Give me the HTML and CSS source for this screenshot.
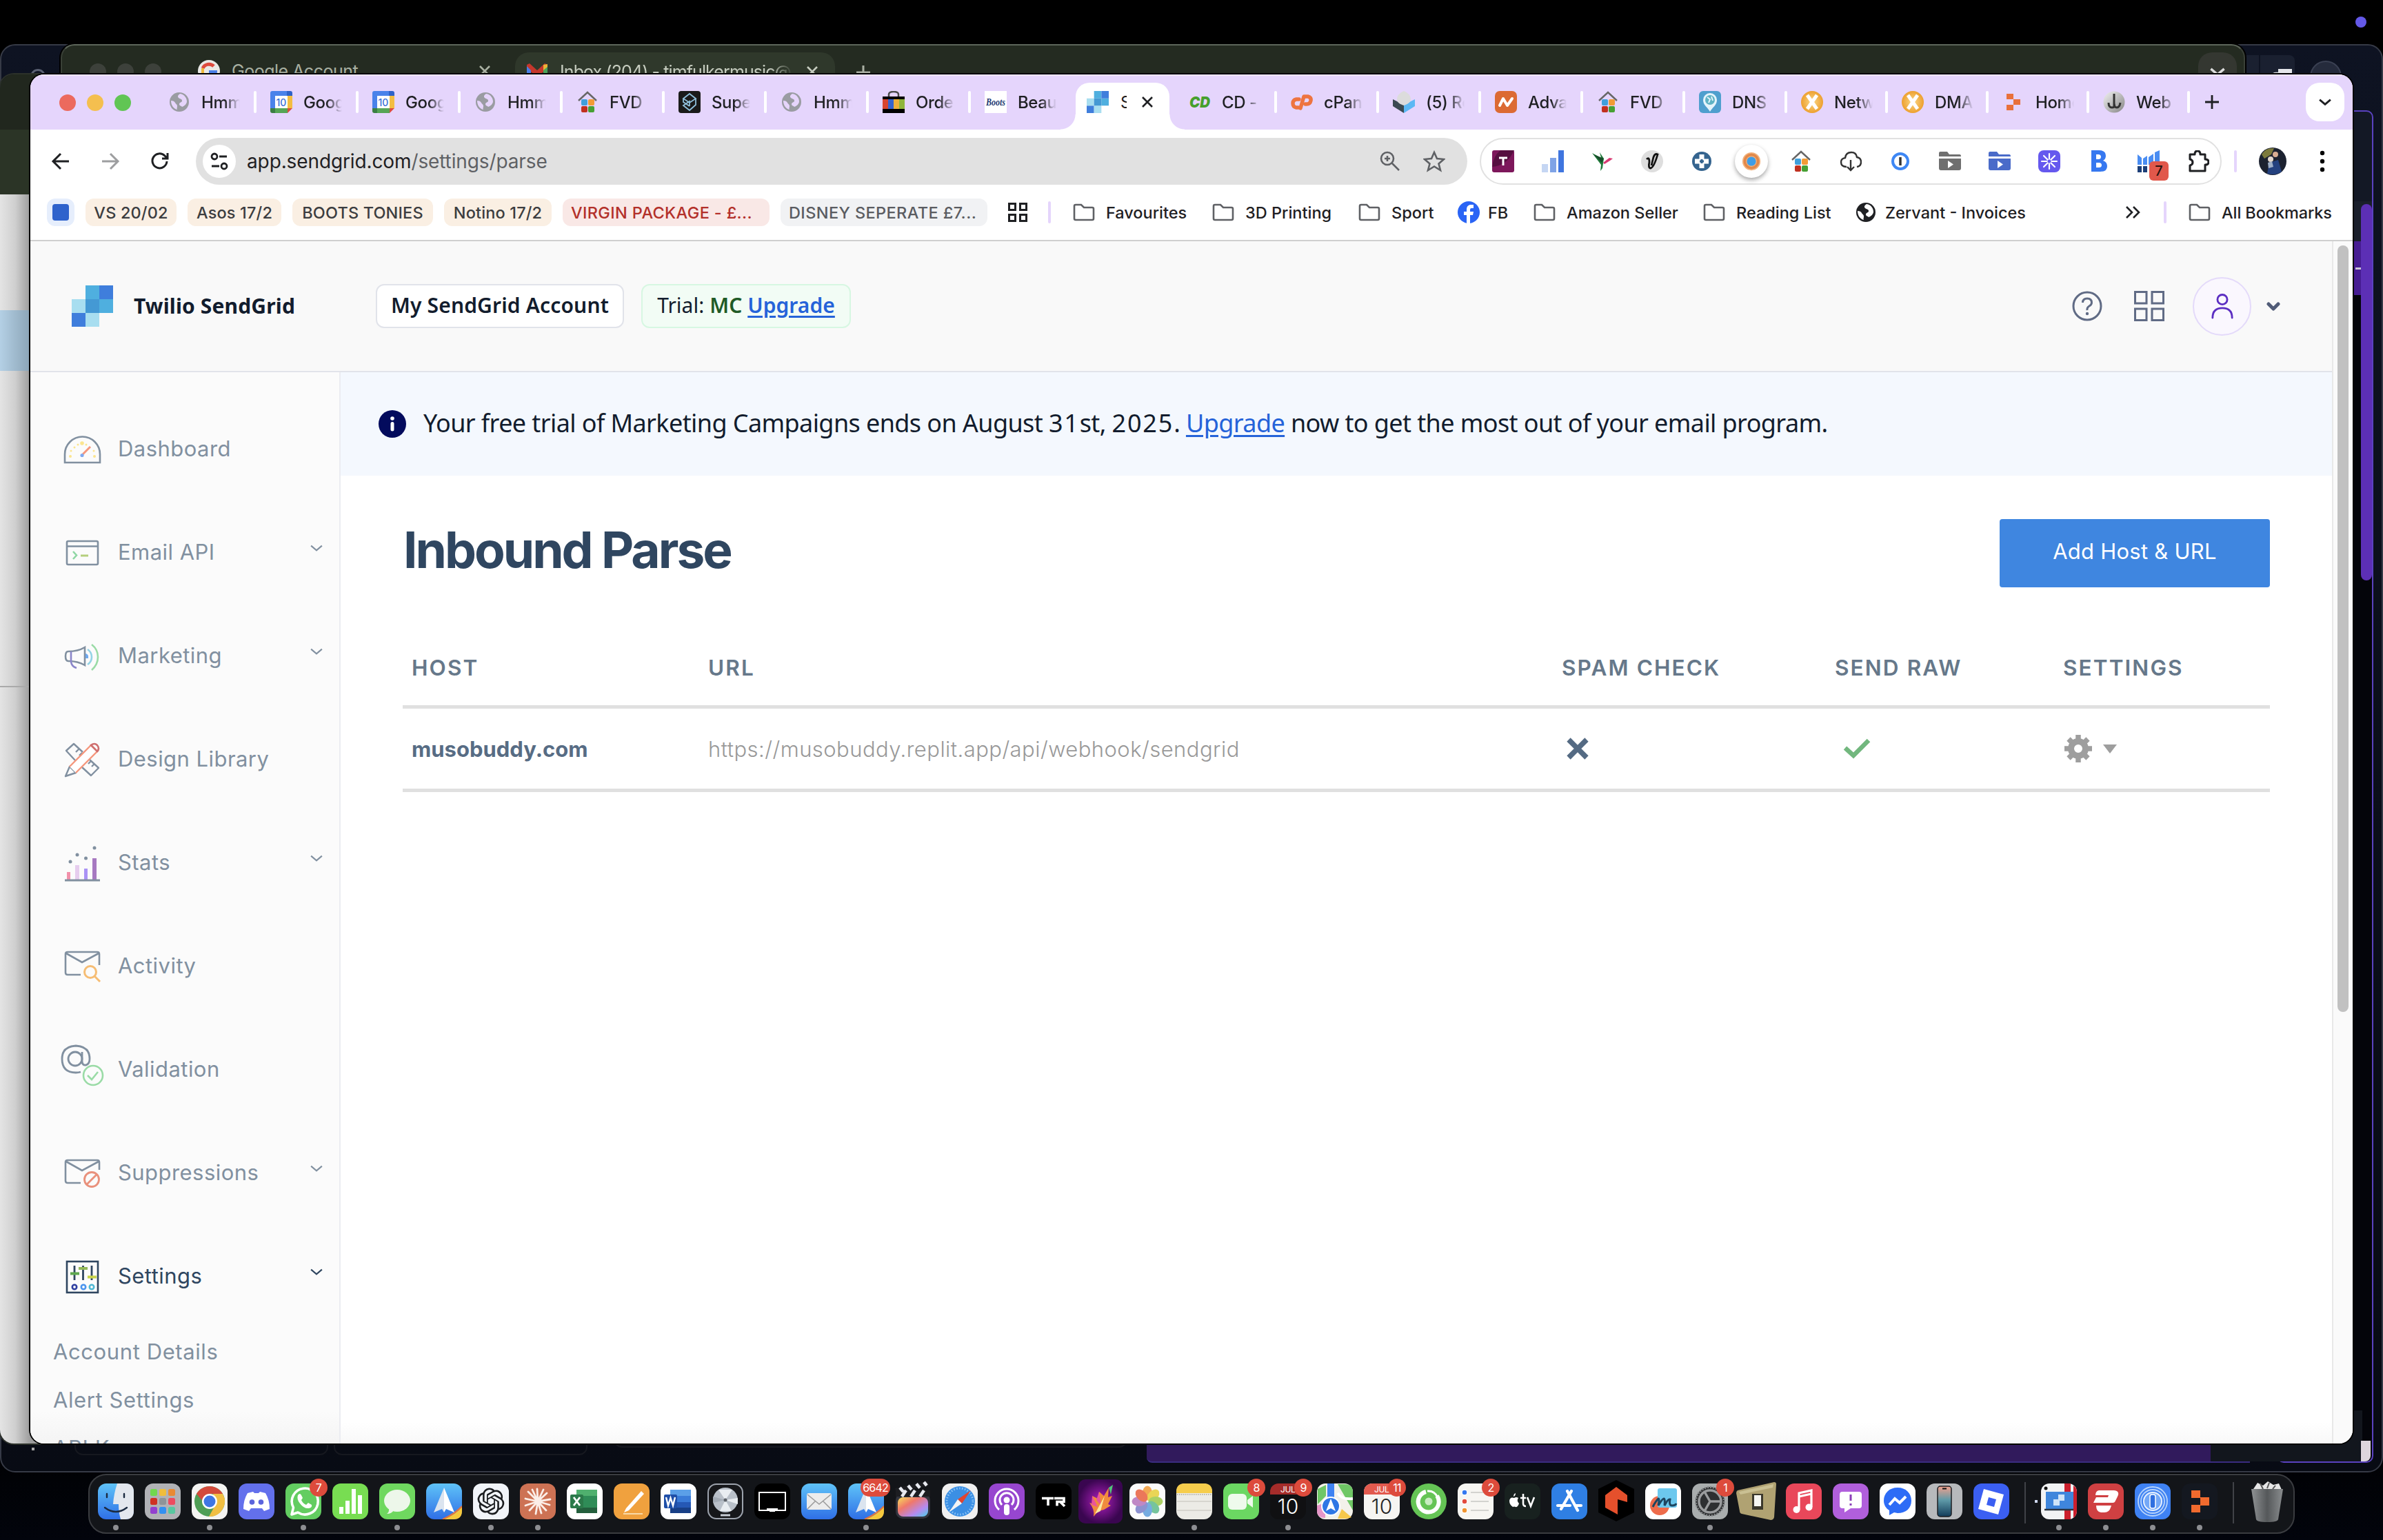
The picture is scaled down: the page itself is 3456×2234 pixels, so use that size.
FILE: index.html
```html
<!DOCTYPE html>
<html lang="en">
<head>
<meta charset="utf-8">
<title>Inbound Parse</title>
<link rel="stylesheet" href="styles.css">
</head>
<body>
<svg class="defs" width="0" height="0" aria-hidden="true">
  <defs>
    <linearGradient id="gBlue" x1="0" y1="0" x2="0" y2="1"><stop offset="0" stop-color="#5fc3f8"/><stop offset="1" stop-color="#2f6fe6"/></linearGradient>
    <linearGradient id="gRain" x1="0" y1="0" x2="1" y2="1"><stop offset="0" stop-color="#f7e05a"/><stop offset=".35" stop-color="#f0786a"/><stop offset=".7" stop-color="#b58af0"/><stop offset="1" stop-color="#4ad0e8"/></linearGradient>
    <linearGradient id="gPhone" x1="0" y1="0" x2="0" y2="1"><stop offset="0" stop-color="#f2a08c"/><stop offset=".45" stop-color="#5f9aa8"/><stop offset="1" stop-color="#123c5a"/></linearGradient>
    <linearGradient id="gTrash" x1="0" y1="0" x2="1" y2="0"><stop offset="0" stop-color="#8f9294"/><stop offset=".5" stop-color="#55585a"/><stop offset="1" stop-color="#8a8d8f"/></linearGradient>
    <linearGradient id="gSilver" x1="0" y1="0" x2="1" y2="1"><stop offset="0" stop-color="#f2f2f2"/><stop offset="1" stop-color="#858585"/></linearGradient>
    <radialGradient id="gOrange"><stop offset="0" stop-color="#fbd98a"/><stop offset="1" stop-color="#eda02f"/></radialGradient>
    <radialGradient id="gMag"><stop offset="0" stop-color="#b01fc0"/><stop offset="1" stop-color="#3a0650"/></radialGradient>
  </defs>
  <symbol id="globe" viewBox="0 0 32 32"><circle cx="16" cy="16" r="14" fill="currentColor"/><path d="M17 4c-3 2-4 4-2 6s5 1 5 4-4 2-4 5 3 2 4 4c3-1 7-4 7-8s-3-10-10-11zM4 14c3 0 5 1 6 3s3 2 3 5-1 3 0 5c-5-1-9-6-9-13z" fill="var(--land,#e6d5fb)"/></symbol>
  <symbol id="gcal" viewBox="0 0 32 32"><path fill="#4a82ea" d="M3 0h21v7H7v18H0V3a3 3 0 0 1 3-3z"/><path fill="#2f62c8" d="M24 0h5a3 3 0 0 1 3 3v4h-8z"/><path fill="#f3bd42" d="M25 7h7v18h-7z"/><path fill="#56a556" d="M7 25h18v7H7z"/><path fill="#3b7f43" d="M0 25h7v7H3a3 3 0 0 1-3-3z"/><path fill="#dc4b3e" d="M25 25h7l-7 7z"/><path fill="#fff" d="M7 7h18v18H7z"/></symbol>
  <symbol id="house" viewBox="0 0 32 32"><path d="M3 14 16 2l13 12" fill="none" stroke="#666" stroke-width="2.4"/><rect x="7" y="12" width="9" height="9" rx="2" fill="#3fa0dc"/><rect x="17" y="12" width="9" height="9" rx="2" fill="#f29b35"/><rect x="7" y="22" width="9" height="9" rx="2" fill="#c0301f"/><rect x="17" y="22" width="9" height="9" rx="2" fill="#46a033"/></symbol>
  <symbol id="sg" viewBox="0 0 60 60"><path fill="#4fafdf" d="M20 0h20v20H20zM40 20h20v20H40z"/><path fill="#3f7edc" d="M40 0h20v20H40zM0 40h20v20H0z"/><path fill="#a8def0" d="M0 20h20v20H0zM20 40h20v20H20z"/><path fill="#4499d4" d="M20 20h20v20H20z"/></symbol>
  <symbol id="xx" viewBox="0 0 32 32"><circle cx="16" cy="16" r="16" fill="url(#gOrange)"/><path d="M9 6l14 20M23 6 9 26" stroke="#fff" stroke-width="5"/></symbol>
  <symbol id="folder" viewBox="0 0 32 32"><path d="M2 7q0-2 2-2h8l4 4h12q2 0 2 2v14q0 2-2 2H4q-2 0-2-2z" fill="none" stroke="#5f6165" stroke-width="2.600"/></symbol>
  <symbol id="chev" viewBox="0 0 16 16"><path class="chevp" d="M1 5l7 6 7-6" fill="none" stroke="currentColor"/></symbol>
  <symbol id="close" viewBox="0 0 20 20"><path d="M3 3l14 14M17 3 3 17" stroke="currentColor" stroke-width="2.600"/></symbol>
  <symbol id="plane" viewBox="0 0 52 52"><rect width="52" height="52" rx="12" fill="url(#gBlue)"/><path fill="#f6c93c" d="M52 34Q44 44 26 52h14q12 0 12-12z"/><path d="M52 33Q42 44 24 52" fill="none" stroke="#e8743a" stroke-width="2"/><path fill="#fff" d="M26 6l15 36-12-5-3 5z"/><path fill="#dbe4ef" d="M26 6 11 42l12-5 3 5z"/></symbol>
</svg>

<div class="desktop">
  <span class="rec-dot"></span>

  <div class="win-navy">
    <span class="n-ring"></span><span class="n-btn"></span><span class="n-btn n-btn2"><svg viewBox="0 0 50 40"><path fill="#e4e6ea" d="M26 20h20v20H26z"/><path d="M18 40V30q0-4 5-4h4" fill="none" stroke="#e4e6ea" stroke-width="2.500"/></svg></span><span class="n-avatar"></span>
    <span class="n-pane"></span><span class="n-head"></span><span class="n-scroll"></span><span class="n-tag"></span>
    <span class="n-card c1"></span><span class="n-card c2"></span><span class="n-card c3"></span><span class="n-purple"></span><span class="n-foot"></span><span class="n-corner"></span><span class="n-speck"></span>
  </div>

  <div class="win-green">
    <div class="g-lights"><i></i><i></i><i></i></div>
    <div class="g-tab">
      <svg viewBox="0 0 32 32"><circle cx="16" cy="16" r="16" fill="#e9e9e6"/><path d="M23 9A10 10 0 0 0 7 12" fill="none" stroke="#dd4b3e" stroke-width="5"/><path d="M7 12v8" stroke="#f0b93b" stroke-width="4"/><path d="M16 17h10q0 8-8 9" fill="none" stroke="#4a7fe5" stroke-width="4"/></svg>
      <span>Google Account</span><svg class="x"><use href="#close"/></svg>
    </div>
    <div class="g-tab on">
      <svg viewBox="0 0 32 32"><path fill="#c5372c" d="M1 6l4-2 11 10L27 4l4 2v6L16 23 1 12z"/><path fill="#4a7fe5" d="M1 8l6 6v14H1z"/><path fill="#e8b437" d="M25 6l6-1v6l-6 5z"/><path fill="#4aa25a" d="M25 14l6-5v19h-6z"/></svg>
      <span class="fade">Inbox (204) - timfulkermusic@</span><svg class="x"><use href="#close"/></svg>
    </div>
    <svg class="g-plus" viewBox="0 0 20 20"><path d="M10 0v20M0 10h20" stroke="#aab0a4" stroke-width="3"/></svg>
    <div class="g-chev"><svg><use href="#chev"/></svg></div>
  </div>

  <div class="win-side"><div class="s-top"></div><div class="s-bar"></div><div class="s-page"><div class="s-band"></div><div class="s-line"></div></div></div>

  <main class="chrome">
    <div class="tabs">
      <div class="lights"><i class="r"></i><i class="y"></i><i class="g"></i></div>
      <div class="tab"><svg class="grey"><use href="#globe"/></svg><span>Hmmm</span></div>
      <div class="tab"><svg viewBox="0 0 32 32"><use href="#gcal"/><text class="day" x="16" y="21.500">10</text></svg><span>Google</span></div>
      <div class="tab"><svg viewBox="0 0 32 32"><use href="#gcal"/><text class="day" x="16" y="21.500">10</text></svg><span>Google</span></div>
      <div class="tab"><svg class="grey"><use href="#globe"/></svg><span>Hmmm</span></div>
      <div class="tab"><svg><use href="#house"/></svg><span>FVD</span></div>
      <div class="tab"><svg viewBox="0 0 32 32"><rect width="32" height="32" rx="4" fill="#1a1a1a"/><path d="M16 4 7 11l9 6 9-6zM7 11v5l9 6M25 11v9l-9 8-9-7 9-6v7" fill="none" stroke="#8fc0dc" stroke-width="1.800"/></svg><span>Supe</span></div>
      <div class="tab"><svg class="grey"><use href="#globe"/></svg><span>Hmmm</span></div>
      <div class="tab"><svg viewBox="0 0 32 32"><path d="M9 9V5q0-4 7-4t7 4v4" fill="none" stroke="#4a4a4a" stroke-width="2.500"/><path fill="#000" d="M0 8h32v24H0z"/><path fill="#d8442e" d="M0 12h8v14H0z"/><path fill="#3564cf" d="M8 12h8v14H8z"/><path fill="#eeb13c" d="M16 12h8v14h-8z"/><path fill="#8fb53c" d="M24 12h8v14h-8z"/></svg><span>Order</span></div>
      <div class="tab nosep"><svg viewBox="0 0 32 32"><path fill="#fff" d="M0 0h32v32H0z"/><text class="boots" x="16" y="21" textLength="28" lengthAdjust="spacingAndGlyphs">Boots</text></svg><span>Beaut</span></div>
      <div class="tab-on"><svg class="fav"><use href="#sg"/></svg><span>S</span><svg class="x"><use href="#close"/></svg></div>
      <div class="tab"><svg viewBox="0 0 32 32"><text class="cd" x="16" y="24" textLength="30" lengthAdjust="spacingAndGlyphs">CD</text></svg><span>CD -</span></div>
      <div class="tab"><svg viewBox="0 0 32 32"><g fill="none" stroke="#ee7440" stroke-width="5.400" stroke-linecap="round" stroke-linejoin="round"><path d="M12 12H8q-5 1-5 6t5 6h3"/><path d="M14 25 19 8h6q5 1 4 6t-6 5h-2"/></g></svg><span>cPane</span></div>
      <div class="tab"><svg viewBox="0 0 32 32"><path fill="#3b4a52" d="M0 12l16 8v12L0 22z"/><path fill="#5cb8f4" d="M32 12l-16 8v12l16-10z"/><path fill="#dcdcdc" d="M16 0q10 4 10 12 0 6-10 9Q6 18 6 12 6 4 16 0z"/></svg><span>(5) Re</span></div>
      <div class="tab"><svg viewBox="0 0 32 32"><rect width="32" height="32" rx="7" fill="#dc6a33"/><path d="M7 21l5-10 6 10 7-10" fill="none" stroke="#fff" stroke-width="4" stroke-linecap="round" stroke-linejoin="round"/></svg><span>Advan</span></div>
      <div class="tab"><svg><use href="#house"/></svg><span>FVD</span></div>
      <div class="tab"><svg viewBox="0 0 32 32"><rect width="32" height="32" rx="6" fill="#4f9fce"/><path fill="#e4f4fb" d="M16 3a10 10 0 0 1 10 10c0 8-7 11-10 17C13 24 6 21 6 13A10 10 0 0 1 16 3z"/><circle cx="16" cy="13" r="7" fill="#5fb3c4"/><path d="M12 9l4 3-2 5m4-9 2 6" stroke="#e4f4fb" stroke-width="2" fill="none"/></svg><span>DNS</span></div>
      <div class="tab slim"><svg><use href="#xx"/></svg><span>Netw</span></div>
      <div class="tab slim"><svg><use href="#xx"/></svg><span>DMA</span></div>
      <div class="tab slim"><svg viewBox="0 0 32 32"><path fill="#e9703a" d="M6 4h10v8H6zM16 12h10v8H16zM6 20h10v8H6z"/></svg><span>Home</span></div>
      <div class="tab slim"><svg viewBox="0 0 32 32"><circle cx="16" cy="16" r="15.500" fill="url(#gSilver)"/><path d="M16 4v20M8 17q0 7 5 7t3-6q0 6 4 6t5-7" fill="none" stroke="#333" stroke-width="3"/></svg><span>Web</span></div>
      <svg class="plus" viewBox="0 0 22 22"><path d="M11 1v20M1 11h20" stroke="#1f2023" stroke-width="2.800"/></svg>
      <div class="tabsearch"><svg><use href="#chev"/></svg></div>
    </div>

    <div class="toolbar">
      <div class="nav">
        <svg viewBox="0 0 28 28"><path d="M26 14H4M14 3 3 14l11 11" fill="none" stroke="#1f2023" stroke-width="3"/></svg>
        <svg viewBox="0 0 28 28"><path d="M2 14h22M14 3l11 11-11 11" fill="none" stroke="#9d9ea0" stroke-width="3"/></svg>
        <svg viewBox="0 0 28 28"><path d="M24 14a10.500 10.500 0 1 1-3-8l4 4M25 2v8h-8" fill="none" stroke="#1f2023" stroke-width="3"/></svg>
      </div>
      <div class="omni">
        <div class="site"><svg viewBox="0 0 28 28"><g fill="none" stroke="#1f2023" stroke-width="2.800"><circle cx="7" cy="7" r="4"/><path d="M14 7h11M3 21h11"/><circle cx="21" cy="21" r="4"/></g></svg></div>
        <span class="url">app.sendgrid.com<em>/settings/parse</em></span>
        <svg class="oi" viewBox="0 0 32 32"><g fill="none" stroke="#5f6165" stroke-width="2.600"><circle cx="12" cy="12" r="9"/><path d="M18 18l11 11M12 8v8M8 12h8"/></g></svg>
        <svg class="oi" viewBox="0 0 32 32"><path d="M16 3l4 9 10 1-7.500 6.500L25 29l-9-5.500L7 29l2.500-9.500L2 13l10-1z" fill="none" stroke="#5f6165" stroke-width="2.600"/></svg>
      </div>
      <div class="exts">
        <svg viewBox="0 0 32 32"><rect width="32" height="32" rx="3" fill="#7d175b"/><path d="M0 24Q22 22 32 0H12Q2 8 0 24z" fill="#560f40"/><path d="M10 11h12M16 11v11" stroke="#fff" stroke-width="3"/></svg>
        <svg viewBox="0 0 32 32"><path fill="#c5d6f3" d="M0 20h9v12H0z"/><path fill="#7fa3e6" d="M12 11h9v21h-9z"/><path fill="#3f75df" d="M24 0h8v32h-8z"/></svg>
        <svg viewBox="0 0 32 32"><path fill="#1f7a3a" d="M1 4l13 7-2-8 6 9-2 14-3 4 1-9z"/><path fill="#d93a72" d="M17 18q6-5 9-7l5 1-4 3-8 5z"/><path fill="#174c2a" d="M3 6l12 12 3-6z"/></svg>
        <svg viewBox="0 0 32 32"><circle cx="16" cy="16" r="16" fill="#dedede"/><path d="M8 13q4-4 4 4-2 9 2 9 5-2 10-20-4-2-6 4-2 8-3 12" fill="none" stroke="#111" stroke-width="2.800"/></svg>
        <svg viewBox="0 0 32 32"><circle cx="16" cy="16" r="14" fill="#35648f"/><path d="M16 6v20M6 16h20" stroke="#fff" stroke-width="7"/><path d="M16 13v6M13 16h6" stroke="#35648f" stroke-width="3"/></svg>
        <div class="bubble"><svg viewBox="0 0 32 32"><circle cx="16" cy="16" r="15" fill="#f2b27c"/><circle cx="16" cy="16" r="11" fill="none" stroke="#e2884a" stroke-width="4"/><circle cx="16" cy="16" r="7.500" fill="#3f9de6"/></svg></div>
        <svg><use href="#house"/></svg>
        <svg viewBox="0 0 32 32"><path d="M10 24q-8 0-8-7 0-5 6-6 1-8 9-8 7 0 8 7 6 1 6 7 0 6-6 7M16 14v15M11 24l5 5 5-5" fill="none" stroke="#333" stroke-width="2.400"/></svg>
        <svg viewBox="0 0 32 32"><circle cx="16" cy="16" r="11" fill="#fff" stroke="#3e87f4" stroke-width="4"/><path d="M16 10v12" stroke="#333" stroke-width="3.500"/></svg>
        <svg viewBox="0 0 32 32"><path fill="#6f6f6f" d="M0 9V4q0-2 2-2h10l3 4h15q2 0 2 3zM0 12h32v14q0 3-3 3H3q-3 0-3-3z"/><path fill="#fff" d="M13 15v11l8-5.500z"/></svg>
        <svg viewBox="0 0 32 32"><path fill="#4a6bc9" d="M0 9V4q0-2 2-2h10l3 4h15q2 0 2 3zM0 12h32v14q0 3-3 3H3q-3 0-3-3z"/><path fill="#fff" d="M13 15v11l8-5.500z"/></svg>
        <svg viewBox="0 0 32 32"><rect width="32" height="32" rx="8" fill="#6558ee"/><g stroke="#fff" stroke-width="2.200" stroke-linecap="round"><path d="M16 5v8M16 19v8M5 16h8M19 16h8M8 8l6 6M18 18l6 6M24 8l-6 6M14 18l-6 6"/></g><circle cx="16" cy="16" r="2.500" fill="#6558ee"/></svg>
        <svg viewBox="0 0 32 32"><path fill="#3678f0" fill-rule="evenodd" d="M5 0h11q10 0 10 8 0 5-4 7 6 2 6 8 0 8-10 8H5zm7 6v7h3q4 0 4-3.500T15 6zm0 12v7h4q4 0 4-3.500T16 18z"/></svg>
        <div class="seven"><svg viewBox="0 0 32 32"><path fill="#4a8df2" d="M0 6l6 5v10H0zM8 12l6-4v13H8zM16 10l7-5v16h-7zM25 3l7-3v21h-7z"/><path fill="#1d3f78" d="M0 23h6v9H0zM8 23h6v9H8z"/></svg><b>7</b></div>
        <svg viewBox="0 0 32 32"><path d="M4 6h7q0-5 4-5t4 5h7v7q5 0 5 4t-5 4v9H4v-8q4-1 4-4.500T4 13z" fill="none" stroke="#1f2023" stroke-width="3" stroke-linejoin="round"/></svg>
      </div>
      <span class="tsep"></span>
      <svg class="me" viewBox="0 0 40 40"><circle cx="20" cy="20" r="20" fill="#1c2230"/><path fill="#7c7a3c" d="M4 10Q10 0 22 1l-4 9-10 6z"/><path fill="#24417f" d="M12 38l3-16 13-4 5 17q-8 6-21 3z"/><circle cx="17" cy="17" r="4" fill="#e5d9cf"/><circle cx="24" cy="10" r="4" fill="#d9ad92"/><path fill="#9fb0c8" d="M13 22l6-2 2 8-7 2z"/></svg>
      <svg class="dots" viewBox="0 0 8 32"><circle cx="4" cy="4" r="3.200"/><circle cx="4" cy="16" r="3.200"/><circle cx="4" cy="28" r="3.200"/></svg>
    </div>

    <div class="marks">
      <div class="chips">
        <span class="chip blue"><i></i></span><span class="chip">VS 20/02</span><span class="chip">Asos 17/2</span><span class="chip">BOOTS TONIES</span><span class="chip">Notino 17/2</span><span class="chip red">VIRGIN PACKAGE - £...</span><span class="chip gray">DISNEY SEPERATE £7...</span>
      </div>
      <svg class="apps" viewBox="0 0 28 28"><path d="M1.500 1.500h9v9h-9zM17.500 1.500h9v9h-9zM1.500 17.500h9v9h-9zM17.500 17.500h9v9h-9z" fill="none" stroke="#1f2023" stroke-width="3"/></svg>
      <span class="tsep"></span>
      <div class="bms">
        <span><svg><use href="#folder"/></svg>Favourites</span><span><svg><use href="#folder"/></svg>3D Printing</span><span><svg><use href="#folder"/></svg>Sport</span><span class="tight"><svg viewBox="0 0 32 32"><circle cx="16" cy="16" r="16" fill="#2a64f5"/><path fill="#fff" d="M13 32V20H9v-5h4v-3c0-5 3-7 6-7h4v5h-3q-2 0-2 2v3h5l-1 5h-4v12z"/></svg>FB</span><span><svg><use href="#folder"/></svg>Amazon Seller</span><span><svg><use href="#folder"/></svg>Reading List</span><span class="zer"><svg><use href="#globe"/></svg>Zervant - Invoices</span>
      </div>
      <svg class="more" viewBox="0 0 22 22"><path d="M2 3l8 8-8 8M12 3l8 8-8 8" fill="none" stroke="#1f2023" stroke-width="2.600"/></svg>
      <span class="tsep"></span>
      <div class="bms all"><span><svg><use href="#folder"/></svg>All Bookmarks</span></div>
    </div>

    <div class="view">
      <div class="page">
        <header class="top">
          <svg class="logo"><use href="#sg"/></svg><strong class="brand">Twilio SendGrid</strong>
          <span class="acct">My SendGrid Account</span>
          <span class="trial">Trial: <b>MC</b> <a>Upgrade</a></span>
          <div class="tools">
            <svg class="i44" viewBox="0 0 44 44"><g fill="none" stroke="#606b85" stroke-width="3"><circle cx="22" cy="22" r="20"/><path d="M15.500 17q0-6 6.500-6t6.500 6q0 3-3.500 5t-3 6"/></g><circle cx="22" cy="33" r="2.200" fill="#606b85"/></svg>
            <svg class="i44" viewBox="0 0 44 44"><path d="M1.500 1.500h16.500v16.500H1.500zM26 1.500h16.500v16.500H26zM1.500 26h16.500v16.500H1.500zM26 26h16.500v16.500H26z" fill="none" stroke="#606b85" stroke-width="3"/></svg>
            <div class="person"><svg viewBox="0 0 36 40"><g fill="none" stroke="#5c2fc2" stroke-width="3" stroke-linecap="round"><circle cx="18" cy="10" r="7.500"/><path d="M3 38q0-15 15-15t15 15"/></g></svg></div>
            <svg class="pc" viewBox="0 0 20 14"><path d="M3 3l7 7 7-7" fill="none" stroke="#515c78" stroke-width="5" stroke-linecap="round" stroke-linejoin="round"/></svg>
          </div>
        </header>
        <div class="body">
          <nav class="side">
            <div class="item"><svg viewBox="0 0 64 64"><path d="M7 53V41a25.500 25.500 0 0 1 51 0v12z" fill="none" stroke="#8190a0" stroke-width="2.600"/><g fill="#fbe58f"><circle cx="32" cy="25" r="2.800"/><circle cx="26" cy="27" r="1.500"/><circle cx="38" cy="27" r="1.500"/><circle cx="21" cy="31" r="1.500"/><circle cx="16" cy="36" r="1.500"/><circle cx="49" cy="36" r="1.500"/><circle cx="15" cy="44" r="2"/><circle cx="50" cy="44" r="2"/></g><path d="M33 41l11-11" stroke="#f5977d" stroke-width="3"/><circle cx="32" cy="42.500" r="2.600" fill="#7fa9f0"/></svg><span>Dashboard</span></div>
            <div class="item"><svg viewBox="0 0 64 64"><rect x="10" y="17" width="45" height="34" rx="2" fill="none" stroke="#8190a0" stroke-width="2.600"/><path d="M10 24.500h45" stroke="#8190a0" stroke-width="2.600"/><path d="M19 32l5 5.500-5 5.500" fill="none" stroke="#8fd7a4" stroke-width="2.600"/><path d="M30 38h11" stroke="#b5cf7c" stroke-width="3"/></svg><span>Email API</span><svg class="c"><use href="#chev"/></svg></div>
            <div class="item"><svg viewBox="0 0 64 64"><path d="M36 21v26Q26 41 12 41q-4 0-4-7t4-7q14 0 24-6z" fill="none" stroke="#8190a0" stroke-width="2.600"/><path d="M16 27v15q1 7 8 9" fill="none" stroke="#8a86c9" stroke-width="2.600"/><path d="M37 30q5 1 4 7h-4z" fill="#6fa9ee"/><path d="M40 24q6 4 6 11t-6 11" fill="none" stroke="#93d3e6" stroke-width="2.600"/><path d="M46 17q9 7 9 18t-9 19" fill="none" stroke="#9adba6" stroke-width="2.600"/></svg><span>Marketing</span><svg class="c"><use href="#chev"/></svg></div>
            <div class="item"><svg viewBox="0 0 64 64"><g fill="none" stroke="#8190a0" stroke-width="2.400" stroke-linejoin="round"><path d="M22 35 9 21 20 11l13 12M23 23l5-5M28 28l4-4M32 45l13 12 11-11-13-12M41 40l4-4M46 44l3-3"/><path d="M8 58l6-14 9 9z"/></g><path d="M14 44l31-31 9 9-31 31" fill="#fff" stroke="#f5977d" stroke-width="2.400"/><path d="M45 13q5-4 9 0 4 5 0 9z" fill="none" stroke="#cf6f6f" stroke-width="2.600"/></svg><span>Design Library</span></div>
            <div class="item"><svg viewBox="0 0 64 64"><path fill="#f291ab" d="M10 47h5v11h-5z"/><path fill="#e6cdee" d="M22 37h6v21h-6z"/><path fill="#aa93f5" d="M35 42h5v16h-5z"/><path fill="#a779c1" d="M47 27h6v31h-6z"/><path d="M7 59h51" stroke="#8190a0" stroke-width="3"/><g fill="#8190a0"><circle cx="15" cy="32" r="2.500"/><circle cx="25" cy="22" r="2.500"/><circle cx="37.500" cy="27" r="2.500"/><circle cx="50" cy="12" r="2.500"/></g></svg><span>Stats</span><svg class="c"><use href="#chev"/></svg></div>
            <div class="item"><svg viewBox="0 0 64 64"><path d="M30 46H11q-3 0-3-3V16q0-3 3-3h43q3 0 3 3v16M9 15l23 13 24-13" fill="none" stroke="#8190a0" stroke-width="2.600"/><g fill="none" stroke="#f6bd74" stroke-width="3"><circle cx="44" cy="42" r="8.500"/><path d="M50 48l8 8"/></g></svg><span>Activity</span></div>
            <div class="item"><svg viewBox="0 0 64 64"><g fill="none" stroke="#8190a0" stroke-width="2.800"><circle cx="22" cy="18" r="10"/><path d="M32 8v13q0 7 6 6 5-2 5-9 0-18-20-19Q3 0 3 18q0 20 20 20 4 0 7-1"/></g><circle cx="48" cy="42" r="14" fill="#fbfbfb" stroke="#9adba6" stroke-width="2.600"/><path d="M40 42l6 6 9-11" fill="none" stroke="#9adba6" stroke-width="2.600"/></svg><span>Validation</span></div>
            <div class="item"><svg viewBox="0 0 64 64"><path d="M30 48H11q-3 0-3-3V18q0-3 3-3h43q3 0 3 3v11M9 17l23 13 24-13" fill="none" stroke="#8190a0" stroke-width="2.600"/><g fill="none" stroke="#e9917c" stroke-width="2.800"><circle cx="46" cy="43" r="10.500"/><path d="M38 51l15-15"/></g></svg><span>Suppressions</span><svg class="c"><use href="#chev"/></svg></div>
            <div class="item on"><svg viewBox="0 0 64 64"><rect x="10" y="12" width="45" height="45" fill="none" stroke="#2f4660" stroke-width="2.600"/><path d="M21 18v21M33.500 18v21M46 18v21" stroke="#2f4660" stroke-width="2.800"/><path d="M15 29.500h13" stroke="#5fa84f" stroke-width="4"/><path d="M27 22h13" stroke="#93b858" stroke-width="4"/><path d="M40 34.500h13" stroke="#c9d44a" stroke-width="4"/><g fill="none" stroke-width="2.600"><circle cx="21" cy="49" r="3.200" stroke="#2f3fa0"/><circle cx="34" cy="49" r="3.200" stroke="#4a94ee"/><circle cx="46" cy="49" r="3.200" stroke="#4fb8d4"/></g></svg><span>Settings</span><svg class="c"><use href="#chev"/></svg></div>
            <div class="sub"><span>Account Details</span><span>Alert Settings</span><span>API Keys</span></div>
          </nav>
          <section class="content">
            <div class="banner">
              <svg viewBox="0 0 40 40"><circle cx="20" cy="20" r="20" fill="#030b5d"/><circle cx="20" cy="12" r="2.800" fill="#fff"/><path d="M20 19.500v8.500" stroke="#fff" stroke-width="5" stroke-linecap="round"/></svg>
              <p>Your free trial of Marketing Campaigns ends on August <span class="num">31</span>st, <span class="num">2025</span>. <a>Upgrade</a> now to get the most out of your email program.</p>
            </div>
            <div class="headrow"><h1>Inbound Parse</h1><span class="cta">Add Host &amp; URL</span></div>
            <div class="table">
              <div class="tr th"><span>HOST</span><span>URL</span><span>SPAM CHECK</span><span>SEND RAW</span><span>SETTINGS</span></div>
              <div class="tr td">
                <b>musobuddy.com</b><span>https://musobuddy.replit.app/api/webhook/sendgrid</span>
                <svg class="no" viewBox="0 0 34 34"><path d="M4 4l26 26M30 4 4 30" stroke="#546a83" stroke-width="7.500"/></svg>
                <svg class="yes" viewBox="0 0 40 30"><path d="M3 14l12 11L37 3" fill="none" stroke="#72b77e" stroke-width="6.500"/></svg>
                <div class="gear"><svg viewBox="0 0 40 40"><g fill="none" stroke="#9e9e9e"><circle cx="20" cy="20" r="10.500" stroke-width="9"/><path d="M20 0v7M20 33v7M0 20h7M33 20h7M6 6l5 5M29 29l5 5M34 6l-5 5M11 29l-5 5" stroke-width="7.500"/></g></svg><i></i></div>
              </div>
            </div>
          </section>
        </div>
      </div>
      <div class="scroll"><i></i></div>
    </div>
  </main>

  <footer class="dock">
    <div class="app run"><svg viewBox="0 0 52 52"><rect width="52" height="52" rx="12" fill="url(#gBlue)"/><path d="M28 0Q23 15 22 30h8q0 12 3 22h7q12 0 12-12V12Q52 0 40 0z" fill="#e3e7ee"/><path d="M13 15v5M38 15v5M10 35q16 12 32 0" fill="none" stroke="#1b2a40" stroke-width="2.400" stroke-linecap="round"/></svg></div>
    <div class="app"><svg viewBox="0 0 52 52"><rect width="52" height="52" rx="12" fill="#b1b2b6"/><g><rect x="8" y="8" width="10" height="10" rx="2.500" fill="#71d84e"/><rect x="21" y="8" width="10" height="10" rx="2.500" fill="#f0bd3c"/><rect x="34" y="8" width="10" height="10" rx="2.500" fill="#e98a34"/><rect x="8" y="21" width="10" height="10" rx="2.500" fill="#cf3223"/><rect x="21" y="21" width="10" height="10" rx="2.500" fill="#8e9498"/><rect x="34" y="21" width="10" height="10" rx="2.500" fill="#ee4b60"/><rect x="8" y="34" width="10" height="10" rx="2.500" fill="#9340cf"/><rect x="21" y="34" width="10" height="10" rx="2.500" fill="#3390f0"/><rect x="34" y="34" width="10" height="10" rx="2.500" fill="#59c7a0"/></g></svg></div>
    <div class="app run"><svg viewBox="0 0 52 52"><rect width="52" height="52" rx="12" fill="#f4f4f2"/><circle cx="26" cy="26" r="22" fill="#4f9e55"/><path fill="#d34a3b" d="M7 15a22 22 0 0 1 38 0H26l-9 12z"/><path fill="#f1bf43" d="M45 15a22 22 0 0 1-20 33l11-20-5-13z"/><circle cx="26" cy="26" r="11" fill="#fff"/><circle cx="26" cy="26" r="8.500" fill="#3f76e3"/></svg></div>
    <div class="app"><svg viewBox="0 0 52 52"><rect width="52" height="52" rx="12" fill="#6370ec"/><path fill="#fff" d="M13 14l8-2 2 2h6l2-2 8 2q6 10 6 23l-8 3-3-4h-16l-3 4-8-3q0-13 6-23z"/><circle cx="19.500" cy="27" r="3.800" fill="#5b64dd"/><circle cx="32.500" cy="27" r="3.800" fill="#5b64dd"/></svg></div>
    <div class="app run"><svg viewBox="0 0 52 52"><rect width="52" height="52" rx="12" fill="#63cd61"/><path d="M9 45l2.500-10A19 19 0 1 1 18 42z" fill="none" stroke="#fff" stroke-width="3.600" stroke-linejoin="round"/><path fill="#fff" d="M18 17q3-4 5 0l2 4-2 3q2 5 7 7l3-3 5 3q1 4-4 5-7 1-13-7-5-6-3-12z"/></svg><b>7</b></div>
    <div class="app"><svg viewBox="0 0 52 52"><rect width="52" height="52" rx="12" fill="#78dd52"/><path fill="#fff" d="M10 34h6v10h-6zM19 25h6v19h-6zM28 8h6v36h-6zM37 17h6v27h-6z"/></svg></div>
    <div class="app run"><svg viewBox="0 0 52 52"><rect width="52" height="52" rx="12" fill="#6fd85f"/><ellipse cx="26" cy="25" rx="19" ry="16" fill="#edf7ea"/><path fill="#edf7ea" d="M14 36q1 5-3 8 7 0 10-5z"/></svg></div>
    <div class="app"><svg><use href="#plane"/></svg></div>
    <div class="app run"><svg viewBox="0 0 52 52"><rect width="52" height="52" rx="12" fill="#f1f4f9"/><path transform="translate(6.500 6.500) scale(1.620)" fill="#1b1d20" d="M22.2819 9.8211a5.9847 5.9847 0 0 0-.5157-4.9108 6.0462 6.0462 0 0 0-6.5098-2.9A6.0651 6.0651 0 0 0 4.9807 4.1818a5.9847 5.9847 0 0 0-3.9977 2.9 6.0462 6.0462 0 0 0 .7427 7.0966 5.98 5.98 0 0 0 .511 4.9107 6.051 6.051 0 0 0 6.5146 2.9001A5.9847 5.9847 0 0 0 13.2599 24a6.0557 6.0557 0 0 0 5.7718-4.2058 5.9894 5.9894 0 0 0 3.9977-2.9001 6.0557 6.0557 0 0 0-.7475-7.0729zm-9.022 12.6081a4.4755 4.4755 0 0 1-2.8764-1.0408l.1419-.0804 4.7783-2.7582a.7948.7948 0 0 0 .3927-.6813v-6.7369l2.02 1.1686a.071.071 0 0 1 .038.0615v5.5826a4.504 4.504 0 0 1-4.4945 4.4944zm-9.6607-4.1254a4.4708 4.4708 0 0 1-.5346-3.0137l.142.0852 4.783 2.7582a.7712.7712 0 0 0 .7806 0l5.8428-3.3685v2.3324a.0804.0804 0 0 1-.0332.0615L9.74 19.9502a4.4992 4.4992 0 0 1-6.1408-1.6464zM2.3408 7.8956a4.485 4.485 0 0 1 2.3655-1.9728V11.6a.7664.7664 0 0 0 .3879.6765l5.8144 3.3543-2.0201 1.1685a.0757.0757 0 0 1-.071 0l-4.8303-2.7865A4.504 4.504 0 0 1 2.3408 7.872zm16.5963 3.8558L13.1038 8.364 15.1192 7.2a.0757.0757 0 0 1 .071 0l4.8303 2.7913a4.4944 4.4944 0 0 1-.6765 8.1042v-5.6772a.79.79 0 0 0-.407-.667zm2.0107-3.0231l-.142-.0852-4.7735-2.7818a.7759.7759 0 0 0-.7854 0L9.409 9.2297V6.8974a.0662.0662 0 0 1 .0284-.0615l4.8303-2.7866a4.4992 4.4992 0 0 1 6.6802 4.66zM8.3065 12.863l-2.02-1.1638a.0804.0804 0 0 1-.038-.0567V6.0742a4.4992 4.4992 0 0 1 7.3757-3.4537l-.142.0805L8.704 5.459a.7948.7948 0 0 0-.3927.6813zm1.0976-2.3654l2.602-1.4998 2.6069 1.4998v2.9994l-2.5974 1.4997-2.6067-1.4997Z"/></svg></div>
    <div class="app run"><svg viewBox="0 0 52 52"><rect width="52" height="52" rx="12" fill="#cd7254"/><g stroke="#fbeee8" stroke-width="2.800" stroke-linecap="round"><path d="M26 26 25 8M26 26l8-17M26 26 39 14M26 26l18-3M26 26l17 5M26 26l12 13M26 26l5 17M26 26l-3 18M26 26 14 39M26 26 8 32M26 26 8 22M26 26 12 12M26 26 18 9"/></g></svg></div>
    <div class="app"><svg viewBox="0 0 52 52"><rect width="52" height="52" rx="12" fill="#fff"/><path fill="#4fb06e" d="M14 9h30v9H14z"/><path fill="#2f8c57" d="M14 18h30v17H14z"/><path fill="#245f3d" d="M14 35h30v8H14z"/><rect x="5" y="16" width="19" height="20" rx="2" fill="#2b7a4a"/><path d="M10 20l9 12M19 20l-9 12" stroke="#fff" stroke-width="2.800"/></svg></div>
    <div class="app"><svg viewBox="0 0 52 52"><rect width="52" height="52" rx="12" fill="#f0a13e"/><path d="M40 11 18 36l-3 6 7-3 22-24z" fill="#fff"/><path d="M14 44h28" stroke="#f8d9a8" stroke-width="2"/></svg></div>
    <div class="app"><svg viewBox="0 0 52 52"><rect width="52" height="52" rx="12" fill="#fff"/><path fill="#5b9fe8" d="M14 9h30v9H14z"/><path fill="#3a7bd8" d="M14 18h30v9H14z"/><path fill="#2558b5" d="M14 27h30v8H14z"/><path fill="#183f86" d="M14 35h30v8H14z"/><rect x="5" y="16" width="19" height="20" rx="2" fill="#1f4fa8"/><path d="M8 20l3 12 3.500-11L18 32l3-12" fill="none" stroke="#fff" stroke-width="2.400"/></svg></div>
    <div class="app"><svg viewBox="0 0 52 52"><rect x="1" y="1" width="50" height="50" rx="12" fill="#16171a" stroke="#9da3ad" stroke-width="2"/><circle cx="26" cy="24" r="18" fill="#b9c0c9"/><path fill="#e9edf1" d="M26 24 16 9h20zM26 24l-8 16h17zM26 24l18-3v9z"/><path fill="#a3abb5" d="M26 24 8 19v9z"/><circle cx="26" cy="24" r="2.500" fill="#5c6168"/><path d="M19 46h14" stroke="#c9ced6" stroke-width="3"/></svg></div>
    <div class="app"><svg viewBox="0 0 52 52"><rect width="52" height="52" rx="12" fill="#000"/><path d="M7 13h38v26H7z" fill="none" stroke="#fff" stroke-width="2"/><path fill="#fff" d="M22 38h8v3H22zM18 36h16v2H18z"/></svg></div>
    <div class="app"><svg viewBox="0 0 52 52"><rect width="52" height="52" rx="12" fill="url(#gBlue)"/><rect x="8" y="14" width="36" height="24" rx="3" fill="#ececec"/><path d="M9 37l12-12M43 37 31 25M9 16l17 14 17-14" fill="none" stroke="#9c9c9c" stroke-width="1.600"/></svg></div>
    <div class="app run"><svg><use href="#plane"/></svg><b>6642</b></div>
    <div class="app"><svg class="over" viewBox="0 0 52 56"><rect x="1" y="18" width="50" height="37" rx="10" fill="#32343e"/><rect x="4" y="24" width="44" height="28" rx="8" fill="url(#gRain)"/><path fill="#1c1d21" d="M0 11 48 0l1 7L2 17zM1 14h50v9H1z"/><path d="M7 10l5 6M19 7l5 6M31 4.500l5 6M42 2l4 5M10 23l6-9M23 23l6-9M36 23l6-9" stroke="#e8eaf0" stroke-width="4.500"/></svg></div>
    <div class="app"><svg viewBox="0 0 52 52"><rect width="52" height="52" rx="12" fill="#f0f0f0"/><circle cx="26" cy="26" r="22" fill="#3b8fe4"/><circle cx="26" cy="26" r="19" fill="none" stroke="#8cc4f5" stroke-width="3" stroke-dasharray="1.500 2.500"/><path fill="#e2442f" d="M42 10 29 29l-6-6z"/><path fill="#f4f4f4" d="M10 42l13-19 6 6z"/></svg></div>
    <div class="app"><svg viewBox="0 0 52 52"><rect width="52" height="52" rx="12" fill="#9746cf"/><g fill="none" stroke="#fff" stroke-width="3"><path d="M15 38a17 17 0 1 1 22 0M19 31a10 10 0 1 1 14 0"/></g><circle cx="26" cy="24" r="4.500" fill="#fff"/><rect x="22" y="30" width="8" height="16" rx="4" fill="#fff"/></svg></div>
    <div class="app"><svg viewBox="0 0 52 52"><rect width="52" height="52" rx="12" fill="#000"/><path d="M9 21.500h17M18 21.500V32M27 21.500h14v5H31v6M35 26l7 7" fill="none" stroke="#fff" stroke-width="3.600"/></svg></div>
    <div class="app"><svg class="big" viewBox="0 0 64 64"><rect width="64" height="64" rx="10" fill="url(#gMag)"/><path fill="#f08b3d" d="M22 54q2-10-6-20l6 2-2-12 8 4 2-10 7 6 7-12-1 14 6-2-6 12 4 2-10 6-8 2z"/><path fill="#e9559b" d="M20 24l8 16-9-3zM30 18l3 20-7-8z"/><path fill="#51c47a" d="M44 12l6-4-3 14z"/><path fill="#fbe9a0" d="M24 50l14-26-6 22z"/></svg></div>
    <div class="app"><svg viewBox="0 0 52 52"><rect width="52" height="52" rx="12" fill="#fbfbfb"/><g opacity=".85"><ellipse cx="26" cy="14" rx="7" ry="10.500" fill="#f19a37"/><ellipse cx="26" cy="14" rx="7" ry="10.500" fill="#e8cf3a" transform="rotate(45 26 26)"/><ellipse cx="26" cy="14" rx="7" ry="10.500" fill="#9ec94b" transform="rotate(90 26 26)"/><ellipse cx="26" cy="14" rx="7" ry="10.500" fill="#5fbb8c" transform="rotate(135 26 26)"/><ellipse cx="26" cy="14" rx="7" ry="10.500" fill="#5f9fdc" transform="rotate(180 26 26)"/><ellipse cx="26" cy="14" rx="7" ry="10.500" fill="#7a80c9" transform="rotate(225 26 26)"/><ellipse cx="26" cy="14" rx="7" ry="10.500" fill="#b574bc" transform="rotate(270 26 26)"/><ellipse cx="26" cy="14" rx="7" ry="10.500" fill="#e9603f" transform="rotate(315 26 26)"/></g></svg></div>
    <div class="app run"><svg viewBox="0 0 52 52"><rect width="52" height="52" rx="12" fill="#ecebe6"/><path fill="#f6cd4c" d="M0 14v-2Q0 0 12 0h28q12 0 12 12v2z"/><path d="M1 26h50M1 39h50" stroke="#cfcec8" stroke-width="1.500"/><path d="M1 16h50" stroke="#a8a69c" stroke-width="1.500" stroke-dasharray="1.500 1.500"/></svg></div>
    <div class="app"><svg viewBox="0 0 52 52"><rect width="52" height="52" rx="12" fill="#6bd762"/><rect x="7" y="15" width="27" height="23" rx="6" fill="#eefaec"/><path fill="#eefaec" d="M35 24l8-6v17l-8-6z"/></svg><b>8</b></div>
    <div class="app cal dark run"><em>JUL</em><span>10</span><b>9</b></div>
    <div class="app"><svg viewBox="0 0 52 52"><rect width="52" height="52" rx="12" fill="#f3f1ea"/><path fill="#6fc765" d="M30 1h10q12 0 12 12v26zM1 8l12-6v16L1 30z"/><path fill="#f6c84b" d="M30 51l6-14 14 12q-4 2-10 2z"/><path fill="#e596c8" d="M0 32l12-4v22Q0 50 0 40z"/><path d="M20 0v24" stroke="#3f82f2" stroke-width="10"/><path d="M30 14q6 10 22 8" stroke="#fff" stroke-width="4" fill="none"/><circle cx="20" cy="33" r="13" fill="#2f77e5" stroke="#fff" stroke-width="2"/><path fill="#fff" d="M20 22l7 18-7-4-7 4z"/></svg></div>
    <div class="app cal"><em>JUL</em><span>10</span><b>11</b></div>
    <div class="app"><svg viewBox="0 0 52 52"><circle cx="26" cy="26" r="26" fill="#65c455"/><path d="M22 12A15 15 0 1 0 38 18" fill="none" stroke="#fff" stroke-width="6"/><path d="M24 11q10-1 15 9" fill="none" stroke="#fff" stroke-width="3"/><circle cx="26" cy="26" r="5.500" fill="#c9ecc2"/></svg></div>
    <div class="app"><svg viewBox="0 0 52 52"><rect width="52" height="52" rx="12" fill="#f7f6f2"/><g stroke="#c8c7c3" stroke-width="1.500"><path d="M19 13h26M19 26h26M19 39h26"/></g><g stroke="#fff" stroke-width="1.500"><circle cx="10" cy="13" r="4" fill="#3478f0"/><circle cx="10" cy="26" r="4" fill="#e24b3d"/><circle cx="10" cy="39" r="4" fill="#ef9430"/></g></svg><b>2</b></div>
    <div class="app"><svg viewBox="0 0 52 52"><rect width="52" height="52" rx="12" fill="#18211f"/><path fill="#fff" d="M14 21q3-2 6 0-3 4 1 8-2 6-5 5-2-1-4 0-5-3-5-9 1-6 7-4zM13 19q0-4 3-5 0 4-3 5z"/><path d="M27 15v14q0 4 4 4M23 21h8M33 20l5 13 5-13" fill="none" stroke="#fff" stroke-width="2.600"/></svg></div>
    <div class="app"><svg viewBox="0 0 52 52"><rect width="52" height="52" rx="12" fill="#2f7fe4"/><g stroke="#fff" stroke-width="4.200" stroke-linecap="round"><path d="M29 11 14 37M23 11l15 28M9 32h18M35 32h8"/></g></svg></div>
    <div class="app"><svg class="over2" viewBox="0 0 52 60"><path fill="#000" d="M26 0l26 13v34L26 60 0 47V13z"/><path fill="#e5502c" d="M10 22l16-12 16 12v10l-14-4v22L10 40z"/></svg></div>
    <div class="app"><svg viewBox="0 0 52 52"><rect width="52" height="52" rx="12" fill="#fff"/><circle cx="21" cy="32" r="14" fill="#ee6c4b"/><rect x="18" y="7" width="28" height="28" rx="3" fill="#6cc8ee"/><path d="M11 34q4-8 8-12 2 0 0 10 6-10 8-10t1 10q5-10 8-9-2 9 3 9t6-3" fill="none" stroke="#1d4560" stroke-width="3"/></svg></div>
    <div class="app run"><svg viewBox="0 0 52 52"><rect width="52" height="52" rx="12" fill="#a9adae"/><circle cx="26" cy="26" r="21" fill="#2d2f31"/><circle cx="26" cy="26" r="16" fill="none" stroke="#9a9c9e" stroke-width="3.500"/><path d="M26 26l16 0M26 26 18 12M26 26l-8 14" stroke="#9a9c9e" stroke-width="3.500"/><circle cx="26" cy="26" r="20.500" fill="none" stroke="#85888a" stroke-width="3" stroke-dasharray="2 2"/></svg><b>1</b></div>
    <div class="app"><svg class="over3" viewBox="0 0 58 56"><path fill="#b0a272" d="M2 13 55 1q3 0 3 3l-3 48q-1 4-5 4L8 47q-3-1-3-4L0 17q0-3 2-4z"/><path fill="#dcd3aa" d="M4 15 54 4l-1 5L6 19z" opacity=".6"/><path fill="#3b382c" d="M23 18h16v23H23z"/><path fill="#f6f6f2" d="M26 20h10v16H26z"/></svg></div>
    <div class="app"><svg viewBox="0 0 52 52"><rect width="52" height="52" rx="12" fill="#e9475a"/><path d="M19 38V14l18-4v24M19 19l18-4" fill="none" stroke="#fff" stroke-width="3.200"/><circle cx="15.500" cy="38" r="5" fill="#fff"/><circle cx="33.500" cy="34.500" r="5" fill="#fff"/></svg></div>
    <div class="app"><svg viewBox="0 0 52 52"><rect width="52" height="52" rx="12" fill="#b15fdc"/><path fill="#fff" d="M14 12h24q4 0 4 4v16q0 4-4 4H26l-9 6v-6h-3q-4 0-4-4V16q0-4 4-4z"/><path d="M26 16v9M26 29v3" stroke="#8a3fb8" stroke-width="3"/></svg></div>
    <div class="app"><svg viewBox="0 0 52 52"><rect width="52" height="52" rx="12" fill="#fff"/><path fill="#2d6cf6" d="M26 6c12 0 20 8 20 19S38 43 26 43l-5-1-7 4v-7C9 36 6 31 6 25 6 14 14 6 26 6z"/><path d="M14 31l8-9 7 6 9-9" fill="none" stroke="#fff" stroke-width="4"/></svg></div>
    <div class="app"><svg viewBox="0 0 52 52"><rect width="52" height="52" rx="12" fill="#b7b9bc"/><rect x="16" y="4" width="20" height="44" rx="4" fill="url(#gPhone)" stroke="#1c1e22" stroke-width="1.500"/><path d="M23 7.500h6" stroke="#111" stroke-width="2"/></svg></div>
    <div class="app"><svg viewBox="0 0 52 52"><rect width="52" height="52" rx="12" fill="#3b5ff2"/><path fill="#fff" fill-rule="evenodd" d="M15 8l29 8-8 29-29-8zm7 12l-3 11 11 3 3-11z"/></svg></div>
    <span class="dsep"></span>
    <div class="app run win"><svg viewBox="0 0 52 52"><rect width="52" height="52" rx="12" fill="#f2f3f4"/><path fill="#cc1f2d" d="M34 0h9v52h-9zM47 3q5 3 5 9v28q0 6-5 10z"/><rect x="7" y="12" width="40" height="25" fill="#3f86dc"/><path fill="#cfe4f8" d="M18 23h9v9h-9zM25 16h9v9h-9z"/><path d="M5 38h42" stroke="#2b3440" stroke-width="2.500"/><circle cx="7" cy="7" r="2.500" fill="#111"/></svg></div>
    <div class="app run"><svg viewBox="0 0 52 52"><rect width="52" height="52" rx="12" fill="#cf4042"/><path fill="#fff" d="M16 10h22q9 1 5 9l-3 6q-1 3-4 3H8l4-8h17l1-3H11q0-6 5-7zM12 32h22l-1 3q-2 7-9 7h-5q-7-1-7-10z"/></svg></div>
    <div class="app run"><svg viewBox="0 0 52 52"><rect width="52" height="52" rx="12" fill="#3f82f3"/><g fill="none" stroke="#b8d4fb" stroke-width="1.800"><circle cx="26" cy="26" r="21"/><circle cx="26" cy="26" r="17"/></g><circle cx="26" cy="26" r="13" fill="#74a8f7" stroke="#e6f0fe" stroke-width="2"/><rect x="22" y="16" width="8" height="20" rx="3" fill="#2f6fe0" stroke="#fff" stroke-width="1.500"/></svg></div>
    <div class="app run"><svg viewBox="0 0 52 52"><rect width="52" height="52" rx="12" fill="#141820"/><path fill="#f06a2e" d="M14 10h13v11H14zM27 20h13v12H27zM14 31h13v11H14z"/></svg></div>
    <span class="dsep"></span>
    <div class="app"><svg class="trash" viewBox="0 0 48 60"><path fill="#e6e6e6" d="M4 12 10 3l8 4 7-6 8 5 8-2 4 9z"/><path d="M14 4l4 8M27 3l-3 8M36 7l-4 5" stroke="#555" stroke-width="2"/><path fill="url(#gTrash)" d="M1 12h46l-7 44q-1 4-16 4T8 56z"/></svg></div>
  </footer>
</div>
</body>
</html>
```
FILE: styles.css
```css
* { box-sizing: border-box; }
body { margin: 0; background: #000; font-family: Inter, "Liberation Sans", sans-serif; }
svg { display: block; flex: none; }
.defs { position: absolute; }
.chevp { stroke-width: var(--cw, 2.5); }
i, em { font-style: normal; }
.desktop { position: relative; width: 3456px; height: 2234px; overflow: hidden; background: linear-gradient(#000 92%, #02040c); }
.rec-dot { position: absolute; left: 3416px; top: 24px; width: 16px; height: 16px; border-radius: 50%; background: #6459e8; }

/* rear window, dark navy */
.win-navy { position: absolute; left: 0; top: 64px; width: 3456px; height: 2072px; border-radius: 22px; border: 2px solid #363a46; background: linear-gradient(#0e1322, #080b14); overflow: hidden; }
.win-navy span { position: absolute; }
.n-ring { left: 42px; top: 34px; width: 22px; height: 22px; border: 3px solid #5a6072; border-radius: 50%; }
.n-btn { left: 3250px; top: 14px; width: 24px; height: 40px; background: #1a2030; }
.n-btn2 { left: 3276px; width: 50px; border-radius: 0 8px 0 0; }
.n-avatar { left: 3348px; top: 22px; width: 46px; height: 46px; border-radius: 50%; background: #252b3c; border: 2px solid #3a4052; }
.n-pane { left: 3300px; top: 94px; width: 140px; height: 1962px; border: 2px solid #5a42c0; border-radius: 10px; background: linear-gradient(#131825 0 130px, #1a1f2b 130px 200px, #04050a 200px); }
.n-head { left: 3408px; top: 284px; width: 20px; height: 78px; background: #461c92; }
.n-scroll { left: 3422px; top: 230px; width: 16px; height: 546px; border-radius: 8px; background: #5c2fb5; }
.n-tag { left: 3414px; top: 322px; width: 8px; height: 3px; background: #c9c3d8; }
.n-card { border: 2px solid #16181f; border-radius: 12px; height: 100px; top: 1945px; }
.c1 { left: 106px; width: 368px; } .c2 { left: 482px; width: 368px; } .c3 { left: 888px; width: 745px; top: 1934px; }
.n-purple { left: 1661px; top: 1980px; width: 1600px; height: 76px; background: #311a5c; border-radius: 0 0 0 8px; border-bottom: 2px solid #3a2c80; }
.n-foot { left: 3204px; top: 1980px; width: 220px; height: 74px; background: #12161d; }
.n-corner { left: 3422px; top: 2024px; width: 14px; height: 30px; background: #ddd6dc; border-radius: 0 0 8px 0; }
.n-speck { left: 44px; top: 2034px; width: 4px; height: 4px; background: #aaa; }

/* second browser, dark olive */
.win-green { position: absolute; left: 88px; top: 64px; width: 3168px; height: 400px; border-radius: 20px; border: 2px solid #3a4037; border-top-color: #5d665a; background: #242b21; color: #a9b0a2; display: flex; align-items: flex-start; box-shadow: 0 0 0 2px #000; }
.g-lights { display: flex; gap: 16px; padding: 26px 0 0 40px; width: 197px; }
.g-lights i { width: 24px; height: 24px; border-radius: 50%; background: #3d413b; }
.g-tab { display: flex; align-items: center; width: 460px; height: 70px; margin-top: 2px; font-size: 25px; }
.g-tab svg { width: 32px; height: 32px; }
.g-tab span { margin-left: 17px; flex: 1; white-space: nowrap; letter-spacing: -.5px; }
.g-tab .x { width: 20px; height: 20px; margin-right: 34px; }
.g-tab.on { background: #2f382b; color: #c6ccbf; border-radius: 20px 20px 0 0; margin-top: 10px; height: 56px; padding-left: 16px; width: 464px; }
.g-tab.on .x { margin-right: 23px; }
.fade { overflow: hidden; -webkit-mask-image: linear-gradient(90deg, #000 90%, transparent); mask-image: linear-gradient(90deg, #000 90%, transparent); margin-right: 18px; }
.g-tab.on .fade { letter-spacing: -.9px; }
.g-plus { width: 20px; height: 20px; margin: 29px 0 0 31px; }
.g-chev { margin: 10px 10px 0 auto; width: 56px; height: 56px; border-radius: 20px; background: #343731; display: grid; place-items: center; color: #ddd; }
.g-chev svg { width: 22px; height: 22px; }

/* third window peeking out on the left */
.win-side { position: absolute; left: 0; top: 108px; width: 400px; height: 1986px; border-radius: 20px; overflow: hidden; box-shadow: 0 0 0 2px #2c312a; }
.s-top { height: 80px; background: #21271e; }
.s-bar { height: 94px; background: #2b3426; }
.s-page { height: 1812px; background: linear-gradient(90deg, #e4e4e4, #cfcfcf 22px, #9c9c9c 44px); padding-top: 168px; }
.s-band { height: 88px; background: linear-gradient(90deg, #b4d0e5, #8ba4b6 44px); }
.s-line { height: 2px; margin-top: 457px; background: #aaa; }

/* front browser window */
.chrome { position: absolute; left: 44px; top: 108px; width: 3368px; height: 1986px; border-radius: 20px; overflow: hidden; background: #fff; box-shadow: 0 0 0 2px #000; display: flex; flex-direction: column; }
.tabs { height: 80px; flex: none; background: #e5d5fc; display: flex; color: #1f2023; border-top: 2px solid #f0e6fe; }
.lights { width: 178px; display: flex; gap: 16px; padding: 27px 0 0 42px; flex: none; }
.lights i { width: 24px; height: 24px; border-radius: 50%; }
.lights .r { background: #ec6a5e; } .lights .y { background: #f4bf4f; } .lights .g { background: #61c554; }
.tab { position: relative; flex: none; width: 148px; height: 76px; display: flex; align-items: center; padding-left: 22px; gap: 16px; font-size: 24px; font-weight: 450; letter-spacing: -.4px; }
.tab svg { width: 32px; height: 32px; }
.tab.slim { width: 146px; }
.tab span { width: 56px; overflow: hidden; white-space: nowrap; -webkit-mask-image: linear-gradient(90deg, #000 60%, transparent); mask-image: linear-gradient(90deg, #000 60%, transparent); }
.tab::after { content: ""; position: absolute; right: -2px; top: 22px; width: 4px; height: 32px; background: #fff; border-radius: 2px; }
.tab.nosep::after { display: none; }
.day { font-size: 14px; fill: #3a6fd8; text-anchor: middle; letter-spacing: 0; }
.boots { font: italic 700 14px "Liberation Serif", serif; fill: #233a73; text-anchor: middle; letter-spacing: 0; }
.cd { font-size: 22px; font-style: italic; font-weight: 900; fill: #46a02c; text-anchor: middle; letter-spacing: 0; }
.grey { color: #9a9ca2; }
.tab-on { position: relative; flex: none; width: 136px; height: 68px; margin: 10px 6px 0; border-radius: 20px 20px 0 0; background: #fff; display: flex; align-items: center; font-size: 24px; padding: 0 16px 12px; }
.tab-on::before, .tab-on::after { content: ""; position: absolute; bottom: 0; width: 22px; height: 22px; }
.tab-on::before { left: -22px; background: radial-gradient(circle at 0 0, transparent 21px, #fff 22px); }
.tab-on::after { right: -22px; background: radial-gradient(circle at 100% 0, transparent 21px, #fff 22px); }
.fav { width: 32px; height: 32px; }
.tab-on span { width: 9px; margin-left: 17px; overflow: hidden; }
.tab-on .x { width: 20px; height: 20px; margin-left: 20px; }
.plus { width: 22px; height: 22px; margin: 27px 0 0 23px; }
.tabsearch { margin: 10px 12px 0 auto; width: 56px; height: 56px; border-radius: 20px; background: #fff; display: grid; place-items: center; }
.tabsearch svg { width: 18px; height: 18px; }

.toolbar { height: 92px; flex: none; display: flex; align-items: center; background: #fff; }
.nav { width: 240px; padding-left: 30px; display: flex; gap: 44px; }
.nav svg { width: 28px; height: 28px; }
.omni { width: 1844px; height: 68px; border-radius: 34px; background: #e1e1e1; display: flex; align-items: center; padding: 0 32px 0 10px; }
.site { width: 48px; height: 48px; border-radius: 50%; background: #fff; display: grid; place-items: center; }
.site svg { width: 28px; height: 28px; }
.url { margin-left: 16px; flex: 1; font-size: 28px; color: #1f2023; letter-spacing: -.12px; }
.url em { color: #5f6165; }
.oi { width: 32px; height: 32px; margin-left: 32px; }
.exts { width: 1076px; height: 68px; margin-left: 18px; border: 2px solid #e1e1e1; border-radius: 34px; display: flex; align-items: center; gap: 40px; padding-left: 16px; }
.exts svg { width: 32px; height: 32px; }
.bubble { width: 48px; height: 48px; margin: 0 -8px; border-radius: 50%; background: #fff; box-shadow: 0 3px 6px rgba(0,0,0,.35); display: grid; place-items: center; }
.bubble svg { width: 28px; height: 28px; }
.seven { position: relative; }
.seven b { position: absolute; left: 17px; top: 16px; width: 28px; height: 28px; border-radius: 6px; background: #e1584b; color: #2a1512; font-size: 20px; font-weight: 500; line-height: 28px; text-align: center; }
.tsep { width: 4px; height: 32px; border-radius: 2px; background: #e5d5fc; margin-left: 18px; flex: none; }
.me { width: 40px; height: 40px; margin-left: 32px; }
.dots { width: 8px; height: 32px; margin-left: 48px; }

.marks { height: 70px; flex: none; border-bottom: 2px solid #cfcfcf; display: flex; align-items: flex-start; padding: 8px 30px 0 24px; font-size: 23.500px; font-weight: 450; color: #1f2023; }
.chips { display: grid; grid-template-columns: 40px 132px 136px 204px 156px 300px 300px; gap: 16px; }
.chip { height: 40px; border-radius: 12px; background: #faefe3; color: #3c3d40; display: flex; align-items: center; justify-content: center; white-space: nowrap; letter-spacing: .15px; }
.chip.blue { background: #e6eefc; }
.chip.blue i { width: 24px; height: 24px; border-radius: 4px; background: #2f63cc; }
.chip.red { background: #f9e8e6; color: #b3302a; justify-content: flex-start; padding-left: 12px; letter-spacing: .35px; }
.chip.gray { background: #f1f2f4; color: #5a5c61; justify-content: flex-start; padding-left: 12px; letter-spacing: .4px; }
.apps { width: 28px; height: 28px; margin: 6px 12px 0 30px; }
.marks .tsep { margin-top: 4px; }
.bms { margin-left: 32px; display: grid; grid-template-columns: 202px 212px 144px 110px 246px 222px 290px; }
.bms span { display: flex; align-items: center; gap: 16px; height: 40px; white-space: nowrap; letter-spacing: 0; }
.bms svg { width: 32px; height: 32px; }
.bms .tight { gap: 12px; }
.bms .zer { gap: 12px; margin-left: -2px; --land: #fff; }
.more { width: 22px; height: 22px; margin: 9px 16px 0 auto; }
.bms.all { grid-template-columns: 208px; }
.bms.all span { letter-spacing: -.1px; }

.view { flex: 1; display: flex; min-height: 0; }
.page { flex: 1; min-width: 0; display: flex; flex-direction: column; }
.scroll { width: 30px; border-left: 2px solid #e8e8e8; background: #fafafa; padding: 6px 0 0 6px; }
.scroll i { display: block; width: 16px; height: 1112px; border-radius: 8px; background: #c1c1c1; }

.top { height: 190px; flex: none; background: #f9f9f9; border-bottom: 2px solid #e1e3ea; display: flex; align-items: center; font-family: "Noto Sans", sans-serif; font-size: 30px; color: #121c2d; white-space: nowrap; }
.logo { width: 60px; height: 60px; margin-left: 60px; }
.brand { margin: -2px 0 0 30px; width: 351px; font-weight: 700; letter-spacing: .15px; }
.acct { width: 360px; height: 64px; border: 2px solid #e1e3ea; border-radius: 12px; background: #fff; line-height: 57px; text-align: center; font-weight: 600; letter-spacing: .15px; }
.trial { width: 304px; height: 64px; margin-left: 25px; border: 2px solid #d7f7e2; border-radius: 12px; background: #f2fcf5; line-height: 58px; text-align: center; letter-spacing: .05px; }
.trial b { color: #205a26; font-weight: 600; }
.trial a { color: #2563d9; font-weight: 600; text-decoration: underline; text-underline-offset: 4px; }
.tools { margin-left: auto; display: flex; align-items: center; padding-right: 75px; }
.i44 { width: 44px; height: 44px; margin-right: 46px; }
.i44 + .i44 { margin-right: 41px; }
.person { width: 85px; height: 85px; border-radius: 50%; border: 2px solid #e4dafa; background: #faf7fe; display: grid; place-items: center; }
.person svg { width: 34px; height: 38px; }
.pc { width: 20px; height: 14px; margin-left: 22px; margin-top: 2px; }

.body { flex: 1; display: flex; min-height: 0; }
.side { width: 450px; flex: none; background: linear-gradient(#fbfbfb 97%, #f4f4f4); border-right: 2px solid #ebecf1; padding-top: 35px; overflow: hidden; color: #8190a0; font-size: 31px; letter-spacing: .45px; }
.item { height: 150px; display: flex; align-items: center; padding-left: 43px; padding-right: 24px; }
.item > svg { width: 64px; height: 64px; overflow: visible; }
.item span { flex: 1; margin-left: 20px; }
.item .c { width: 18px; height: 18px; margin-bottom: 10px; --cw: 1.9; }
.item.on { color: #2f4660; }
.sub { display: flex; flex-direction: column; padding: 1px 0 0 33px; letter-spacing: .6px; }
.sub span { height: 70px; line-height: 70px; }

.content { flex: 1; min-width: 0; background: linear-gradient(#fff 98%, #f8f8f8); }
.banner { height: 150px; background: #f4f8fe; display: flex; align-items: center; padding-left: 55px; font-family: "Noto Sans", sans-serif; font-size: 36px; color: #121c2d; white-space: nowrap; }
.banner svg { width: 40px; height: 40px; }
.banner p { margin: -4px 0 0 25px; letter-spacing: -.6px; }
.banner .num { letter-spacing: 1.8px; }
.banner a { color: #2563d9; text-decoration: underline; text-underline-offset: 4px; }
.headrow { display: flex; justify-content: space-between; padding: 63px 90px 0 91px; }
h1 { margin: -3px 0 0; font-size: 73px; line-height: 96px; font-weight: 680; letter-spacing: -3px; color: #2f4660; }
.cta { width: 392px; height: 99px; border-radius: 4px; background: #3f86e0; color: #fff; font-size: 31px; line-height: 94px; text-align: center; letter-spacing: .25px; }
.table { margin: 56px 90px 0 90px; }
.tr { display: grid; grid-template-columns: 430px 1238px 396px 331px 1fr; align-items: center; padding-left: 13px; border-bottom: 5px solid #e0e0e0; }
.th { height: 120px; padding-top: 5px; font-size: 31.500px; font-weight: 600; letter-spacing: 2.100px; color: #66788a; }
.td { height: 121px; font-size: 31px; color: #999; }
.td > span { font-weight: 300; letter-spacing: .45px; }
.td b { color: #576c84; font-weight: 650; }
.no { width: 34px; height: 34px; margin-left: 6px; }
.yes { width: 40px; height: 30px; margin-left: 12px; }
.gear { display: flex; align-items: center; gap: 16px; margin-left: 2px; }
.gear svg { width: 40px; height: 40px; }
.gear i { border: 10px solid transparent; border-top: 13px solid #9e9e9e; border-bottom: 0; }

/* dock */
.dock { position: absolute; left: 128px; top: 2138px; width: 3200px; height: 87px; border-radius: 26px; border: 2px solid #3a3c40; background: #131519; display: flex; gap: 16px; padding: 12px 0 0 12px; }
.app { position: relative; width: 52px; height: 52px; flex: none; }
.app svg { width: 52px; height: 52px; }
.app .over { height: 56px; margin-top: -4px; }
.app .over2 { height: 60px; margin-top: -5px; }
.app .over3 { width: 58px; height: 56px; margin: -3px 0 0 -4px; }
.app .big { width: 64px; height: 64px; margin: -6px; }
.app .trash { width: 48px; height: 60px; margin: -4px 0 0 2px; }
.app.run::after { content: ""; position: absolute; left: 22px; top: 60px; width: 8px; height: 8px; border-radius: 50%; background: #8d8e92; }
.app b { position: absolute; right: -9px; top: -7px; min-width: 26px; height: 26px; padding: 0 3px; border-radius: 13px; background: #dd4b3c; color: #fff; font-size: 16px; font-weight: 400; line-height: 26px; text-align: center; letter-spacing: -.8px; }
.cal { border-radius: 12px; background: #f6f5f2; color: #222; }
.cal em { display: block; height: 16px; border-radius: 12px 12px 0 0; background: #e25a4e; color: #fff; font-size: 12px; line-height: 17px; padding-left: 15px; letter-spacing: -.4px; }
.cal span { display: block; font-size: 30px; line-height: 34px; font-weight: 300; text-align: center; }
.cal.dark { background: #101012; color: #fff; }
.cal.dark em { background: #a52c2a; }
.dsep { width: 2px; height: 60px; margin: -2px 6px 0; background: #404247; flex: none; }
.win::before { content: ""; position: absolute; left: -9px; top: 24px; width: 4px; height: 4px; background: #cfd8f0; }
```
